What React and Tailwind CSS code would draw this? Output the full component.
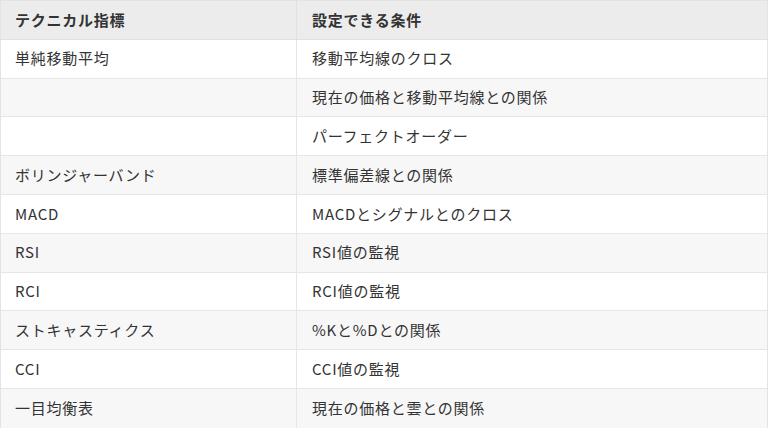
import React from "react";

const rows = [
  ["単純移動平均", "移動平均線のクロス"],
  ["", "現在の価格と移動平均線との関係"],
  ["", "パーフェクトオーダー"],
  ["ボリンジャーバンド", "標準偏差線との関係"],
  ["MACD", "MACDとシグナルとのクロス"],
  ["RSI", "RSI値の監視"],
  ["RCI", "RCI値の監視"],
  ["ストキャスティクス", "%Kと%Dとの関係"],
  ["CCI", "CCI値の監視"],
  ["一目均衡表", "現在の価格と雲との関係"],
];

export default function App() {
  return (
    <div
      className="w-[768px] h-[428px] overflow-hidden bg-white text-[#333333]"
      style={{ fontFamily: '"Noto Sans CJK JP", "Noto Sans", sans-serif' }}
    >
      <div className="border border-[#e3e3e3] flex flex-col">
        <div className="flex h-[38.8px] bg-[#ececec] border-b border-[#e0e0e0] items-center font-bold text-[15px] tracking-[0.05em]">
          <div className="w-[296px] h-full flex items-center pl-[14px] border-r border-[#e0e0e0]">
            テクニカル指標
          </div>
          <div className="flex-1 h-full flex items-center pl-[15px]">設定できる条件</div>
        </div>
        {rows.map((r, i) => (
          <div
            key={i}
            className={
              "flex h-[38.8px] items-center text-[15px] tracking-[0.05em] " +
              (i % 2 === 1 ? "bg-[#f7f7f7] " : "bg-white ") +
              (i < rows.length - 1 ? "border-b border-[#e6e6e6]" : "")
            }
          >
            <div className="w-[296px] h-full flex items-center pl-[14px] border-r border-[#e6e6e6]">
              {r[0]}
            </div>
            <div className="flex-1 h-full flex items-center pl-[15px]">{r[1]}</div>
          </div>
        ))}
      </div>
    </div>
  );
}
